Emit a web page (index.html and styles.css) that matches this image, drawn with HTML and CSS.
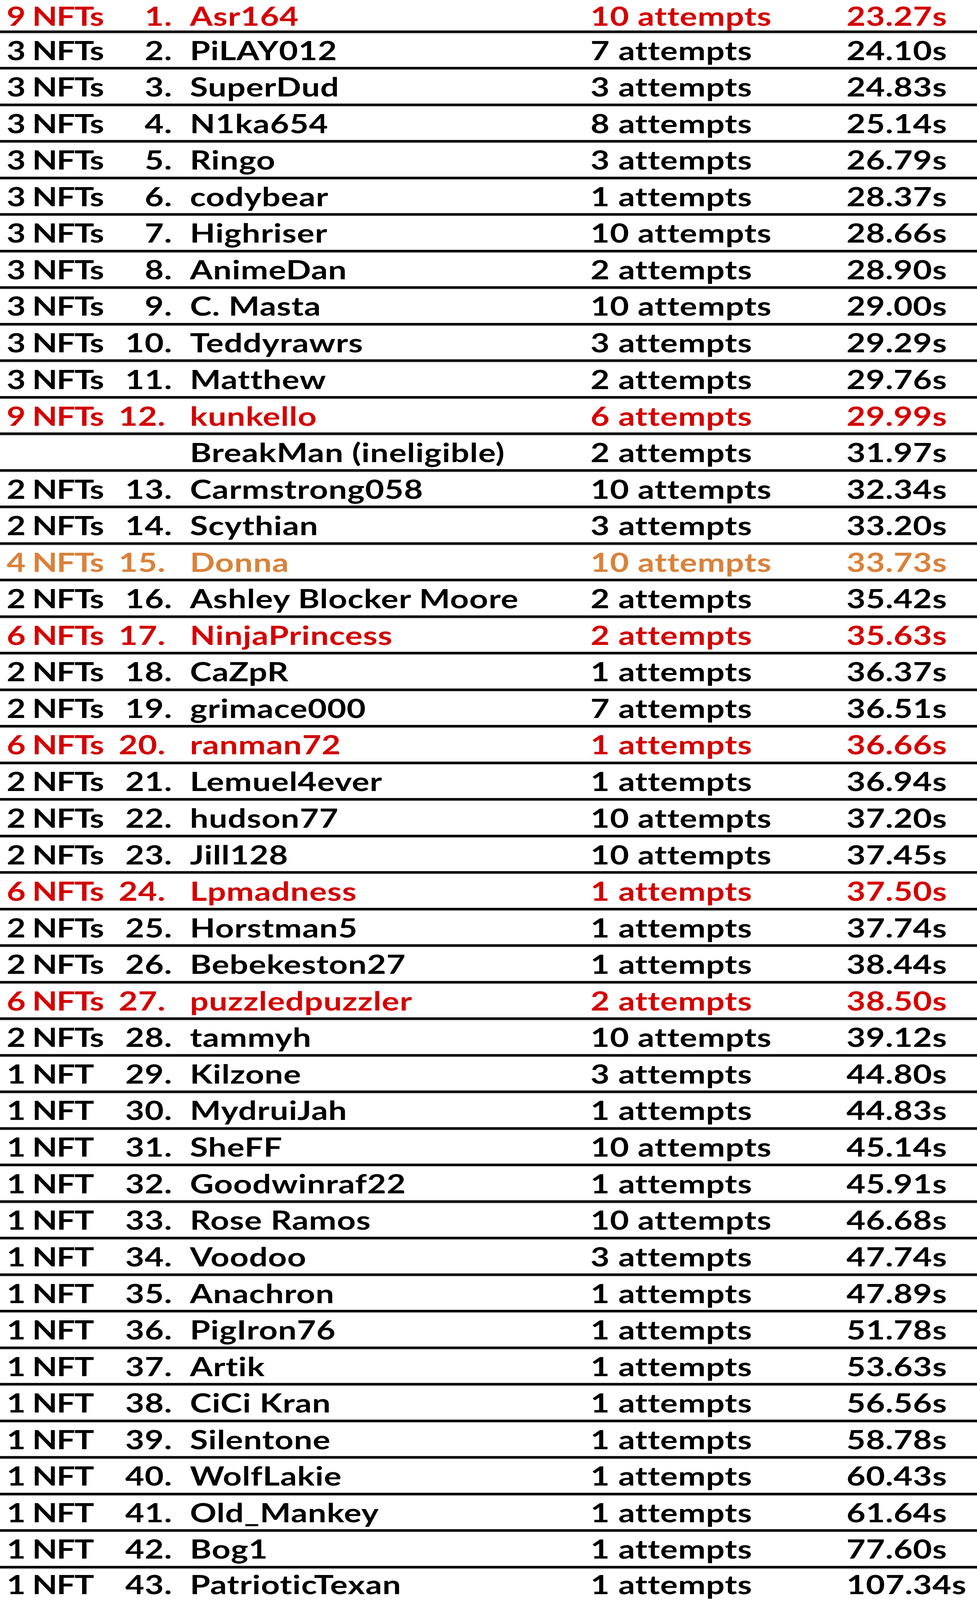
FILE: index.html
```html
<!DOCTYPE html>
<html lang="en">
<head>
<meta charset="utf-8">
<title>Leaderboard</title>
<link rel="stylesheet" href="styles.css">
</head>
<body>
<div class="sheet">
<div class="board" id="board">
  <div class="row first red"><span class="nft">9 NFTs</span><span class="rank">1.</span><span class="name">Asr164</span><span class="att">10 attempts</span><span class="time">23.27s</span></div>
  <div class="row"><span class="nft">3 NFTs</span><span class="rank">2.</span><span class="name">PiLAY012</span><span class="att">7 attempts</span><span class="time">24.10s</span></div>
  <div class="row"><span class="nft">3 NFTs</span><span class="rank">3.</span><span class="name">SuperDud</span><span class="att">3 attempts</span><span class="time">24.83s</span></div>
  <div class="row"><span class="nft">3 NFTs</span><span class="rank">4.</span><span class="name">N1ka654</span><span class="att">8 attempts</span><span class="time">25.14s</span></div>
  <div class="row"><span class="nft">3 NFTs</span><span class="rank">5.</span><span class="name">Ringo</span><span class="att">3 attempts</span><span class="time">26.79s</span></div>
  <div class="row"><span class="nft">3 NFTs</span><span class="rank">6.</span><span class="name">codybear</span><span class="att">1 attempts</span><span class="time">28.37s</span></div>
  <div class="row"><span class="nft">3 NFTs</span><span class="rank">7.</span><span class="name">Highriser</span><span class="att">10 attempts</span><span class="time">28.66s</span></div>
  <div class="row"><span class="nft">3 NFTs</span><span class="rank">8.</span><span class="name">AnimeDan</span><span class="att">2 attempts</span><span class="time">28.90s</span></div>
  <div class="row"><span class="nft">3 NFTs</span><span class="rank">9.</span><span class="name">C. Masta</span><span class="att">10 attempts</span><span class="time">29.00s</span></div>
  <div class="row"><span class="nft">3 NFTs</span><span class="rank">10.</span><span class="name">Teddyrawrs</span><span class="att">3 attempts</span><span class="time">29.29s</span></div>
  <div class="row"><span class="nft">3 NFTs</span><span class="rank">11.</span><span class="name">Matthew</span><span class="att">2 attempts</span><span class="time">29.76s</span></div>
  <div class="row red shift"><span class="nft">9 NFTs</span><span class="rank">12.</span><span class="name">kunkello</span><span class="att">6 attempts</span><span class="time">29.99s</span></div>
  <div class="row"><span class="nft"></span><span class="rank"></span><span class="name">BreakMan (ineligible)</span><span class="att">2 attempts</span><span class="time">31.97s</span></div>
  <div class="row"><span class="nft">2 NFTs</span><span class="rank">13.</span><span class="name">Carmstrong058</span><span class="att">10 attempts</span><span class="time">32.34s</span></div>
  <div class="row"><span class="nft">2 NFTs</span><span class="rank">14.</span><span class="name">Scythian</span><span class="att">3 attempts</span><span class="time">33.20s</span></div>
  <div class="row orange shift"><span class="nft">4 NFTs</span><span class="rank">15.</span><span class="name">Donna</span><span class="att">10 attempts</span><span class="time">33.73s</span></div>
  <div class="row"><span class="nft">2 NFTs</span><span class="rank">16.</span><span class="name">Ashley Blocker Moore</span><span class="att">2 attempts</span><span class="time">35.42s</span></div>
  <div class="row red shift"><span class="nft">6 NFTs</span><span class="rank">17.</span><span class="name">NinjaPrincess</span><span class="att">2 attempts</span><span class="time">35.63s</span></div>
  <div class="row"><span class="nft">2 NFTs</span><span class="rank">18.</span><span class="name">CaZpR</span><span class="att">1 attempts</span><span class="time">36.37s</span></div>
  <div class="row"><span class="nft">2 NFTs</span><span class="rank">19.</span><span class="name">grimace000</span><span class="att">7 attempts</span><span class="time">36.51s</span></div>
  <div class="row red shift"><span class="nft">6 NFTs</span><span class="rank">20.</span><span class="name">ranman72</span><span class="att">1 attempts</span><span class="time">36.66s</span></div>
  <div class="row"><span class="nft">2 NFTs</span><span class="rank">21.</span><span class="name">Lemuel4ever</span><span class="att">1 attempts</span><span class="time">36.94s</span></div>
  <div class="row"><span class="nft">2 NFTs</span><span class="rank">22.</span><span class="name">hudson77</span><span class="att">10 attempts</span><span class="time">37.20s</span></div>
  <div class="row"><span class="nft">2 NFTs</span><span class="rank">23.</span><span class="name">Jill128</span><span class="att">10 attempts</span><span class="time">37.45s</span></div>
  <div class="row red shift"><span class="nft">6 NFTs</span><span class="rank">24.</span><span class="name">Lpmadness</span><span class="att">1 attempts</span><span class="time">37.50s</span></div>
  <div class="row"><span class="nft">2 NFTs</span><span class="rank">25.</span><span class="name">Horstman5</span><span class="att">1 attempts</span><span class="time">37.74s</span></div>
  <div class="row"><span class="nft">2 NFTs</span><span class="rank">26.</span><span class="name">Bebekeston27</span><span class="att">1 attempts</span><span class="time">38.44s</span></div>
  <div class="row red shift"><span class="nft">6 NFTs</span><span class="rank">27.</span><span class="name">puzzledpuzzler</span><span class="att">2 attempts</span><span class="time">38.50s</span></div>
  <div class="row"><span class="nft">2 NFTs</span><span class="rank">28.</span><span class="name">tammyh</span><span class="att">10 attempts</span><span class="time">39.12s</span></div>
  <div class="row"><span class="nft">1 NFT</span><span class="rank">29.</span><span class="name">Kilzone</span><span class="att">3 attempts</span><span class="time">44.80s</span></div>
  <div class="row"><span class="nft">1 NFT</span><span class="rank">30.</span><span class="name">MydruiJah</span><span class="att">1 attempts</span><span class="time">44.83s</span></div>
  <div class="row"><span class="nft">1 NFT</span><span class="rank">31.</span><span class="name">SheFF</span><span class="att">10 attempts</span><span class="time">45.14s</span></div>
  <div class="row"><span class="nft">1 NFT</span><span class="rank">32.</span><span class="name">Goodwinraf22</span><span class="att">1 attempts</span><span class="time">45.91s</span></div>
  <div class="row"><span class="nft">1 NFT</span><span class="rank">33.</span><span class="name">Rose Ramos</span><span class="att">10 attempts</span><span class="time">46.68s</span></div>
  <div class="row"><span class="nft">1 NFT</span><span class="rank">34.</span><span class="name">Voodoo</span><span class="att">3 attempts</span><span class="time">47.74s</span></div>
  <div class="row"><span class="nft">1 NFT</span><span class="rank">35.</span><span class="name">Anachron</span><span class="att">1 attempts</span><span class="time">47.89s</span></div>
  <div class="row"><span class="nft">1 NFT</span><span class="rank">36.</span><span class="name">PigIron76</span><span class="att">1 attempts</span><span class="time">51.78s</span></div>
  <div class="row"><span class="nft">1 NFT</span><span class="rank">37.</span><span class="name">Artik</span><span class="att">1 attempts</span><span class="time">53.63s</span></div>
  <div class="row"><span class="nft">1 NFT</span><span class="rank">38.</span><span class="name">CiCi Kran</span><span class="att">1 attempts</span><span class="time">56.56s</span></div>
  <div class="row"><span class="nft">1 NFT</span><span class="rank">39.</span><span class="name">Silentone</span><span class="att">1 attempts</span><span class="time">58.78s</span></div>
  <div class="row"><span class="nft">1 NFT</span><span class="rank">40.</span><span class="name">WolfLakie</span><span class="att">1 attempts</span><span class="time">60.43s</span></div>
  <div class="row"><span class="nft">1 NFT</span><span class="rank">41.</span><span class="name">Old_Mankey</span><span class="att">1 attempts</span><span class="time">61.64s</span></div>
  <div class="row"><span class="nft">1 NFT</span><span class="rank">42.</span><span class="name">Bog1</span><span class="att">1 attempts</span><span class="time">77.60s</span></div>
  <div class="row last"><span class="nft">1 NFT</span><span class="rank">43.</span><span class="name">PatrioticTexan</span><span class="att">1 attempts</span><span class="time">107.34s</span></div>
</div>
</div>
<script src="fit.js"></script>
</body>
</html>
```
FILE: styles.css
```css
html, body {
  margin: 0;
  padding: 0;
  background: #ffffff;
}

html {
  height: 100%;
  overflow: hidden;
}

body {
  height: 100%;
  overflow: hidden;
}

/* viewport-sized frame that clips the sheet */
.sheet {
  height: 100vh;
  overflow: hidden;
}

/* The sheet is designed for a 5142px tall window; --fit-y squeezes it
   vertically when the window is shorter so every row stays visible. */
.board {
  font-family: Lato, "Liberation Sans", sans-serif;
  font-weight: 700;
  font-size: 84px;
  letter-spacing: 1px;
  color: #000000;
  transform-origin: 0 0;
  transform: scaleY(var(--fit-y, 1));
}

.row {
  display: grid;
  grid-template-columns: 300px 141px 1070px 655px 1fr;
  height: 109.5px;
  line-height: 109.5px;
  border-bottom: 8px solid #000000;
  box-shadow: 0 2px 0 #c8c8c8;
  white-space: nowrap;
}

/* the sheet is scrolled a little: the first row shows only its lower part */
.row.first {
  height: 97.5px;
  line-height: 101px;
}

.row.last {
  height: 101.5px;
  line-height: 101.5px;
  border-bottom: none;
  box-shadow: none;
}

.nft {
  padding-left: 17px;
  letter-spacing: -2px;
}

.rank {
  text-align: right;
}

.row.shift .rank {
  padding-right: 17px;
}

.name {
  padding-left: 45px;
}

.red {
  color: #d40000;
}

.orange {
  color: #d9823b;
}
```
FILE: fit.js
```js
(function () {
  var designHeight = 5142;
  function fit() {
    var k = Math.min(1, (window.innerHeight - 0.5) / designHeight);
    document.documentElement.style.setProperty('--fit-y', String(k));
  }
  fit();
  window.addEventListener('resize', fit);
})();
```
